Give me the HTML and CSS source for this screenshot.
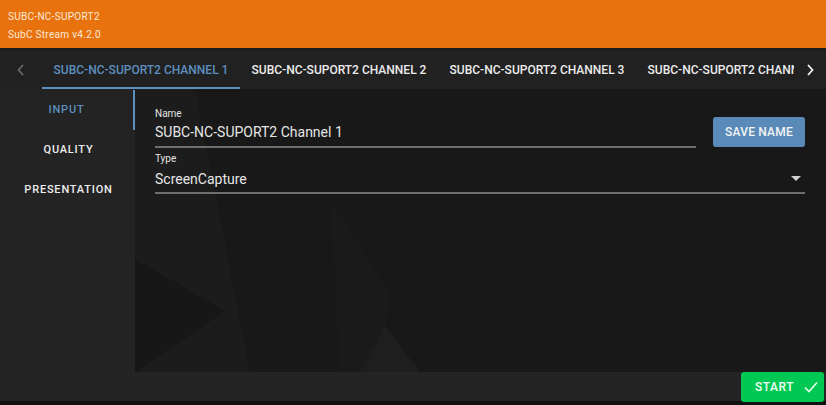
FILE: index.html
```html
<!DOCTYPE html>
<html lang="en">
<head>
  <meta charset="UTF-8">
  <meta name="viewport" content="width=device-width, initial-scale=1.0">
  <title>SubC Stream</title>
  <link rel="stylesheet" href="styles.css">
</head>
<body>
  <div class="header">
    <div>SUBC-NC-SUPORT2</div>
    <div>SubC Stream v4.2.0</div>
  </div>
  <div class="tabbar">
    <div class="chev chev-left">
      <svg width="10" height="12" viewBox="0 0 10 12"><path d="M7 1 L2.5 6 L7 11" fill="none" stroke="#6e6e6e" stroke-width="1.6"/></svg>
    </div>
    <div class="tabs">
      <div class="tab active">SUBC-NC-SUPORT2 CHANNEL 1</div>
      <div class="tab">SUBC-NC-SUPORT2 CHANNEL 2</div>
      <div class="tab">SUBC-NC-SUPORT2 CHANNEL 3</div>
      <div class="tab">SUBC-NC-SUPORT2 CHANNEL 4</div>
    </div>
    <div class="chev chev-right">
      <svg width="10" height="12" viewBox="0 0 10 12"><path d="M3 1 L7.5 6 L3 11" fill="none" stroke="#f2f2f2" stroke-width="1.8"/></svg>
    </div>
  </div>
  <div class="main">
    <div class="sidebar">
      <div class="side-item active">INPUT</div>
      <div class="side-item">QUALITY</div>
      <div class="side-item">PRESENTATION</div>
    </div>
    <div class="content">
      <!-- faint background artwork -->
      <svg class="backdrop" width="691" height="283" viewBox="0 0 691 283">
        <polygon points="0,0 60,0 115,283 0,283" fill="#1c1c1c"/>
        <polygon points="0,170 90,222 0,283" fill="#171717"/>
        <polygon points="195,110 255,205 245,283 205,283" fill="#1a1a1a"/>
        <polygon points="250,237 285,283 225,283" fill="#1e1e1e"/>
      </svg>
      <div class="row">
        <div class="field grow">
          <label>Name</label>
          <div class="value">SUBC-NC-SUPORT2 Channel 1</div>
        </div>
        <button class="btn-save">SAVE NAME</button>
      </div>
      <div class="field type-field">
        <label>Type</label>
        <div class="value select">
          <span>ScreenCapture</span>
          <svg width="10" height="5" viewBox="0 0 10 5"><polygon points="0,0 10,0 5,5" fill="#cfcfcf"/></svg>
        </div>
      </div>
    </div>
  </div>
  <div class="footer">
    <button class="btn-start">START
      <svg width="14" height="12" viewBox="0 0 14 12"><path d="M1 6.5 L5 10.5 L13 1.5" fill="none" stroke="#e9fbee" stroke-width="1.6"/></svg>
    </button>
  </div>
  <div class="bottom"></div>
</body>
</html>
```

FILE: styles.css
```css
body {
  margin: 0;
  width: 826px;
  height: 405px;
  overflow: hidden;
  background-color: #141414;
  font-family: Roboto, "Liberation Sans", sans-serif;
  color: #ececec;
}
.header {
  height: 50px;
  box-sizing: border-box;
  padding: 8px 8px 0;
  background-color: #e8730e;
  border-bottom: 2px solid #1b1b1b;
  font-size: 10px;
  line-height: 18px;
  color: #fbe9da;
  letter-spacing: 0.3px;
}
.tabbar {
  display: flex;
  height: 39px;
  background-color: #212121;
}
.chev {
  display: flex;
  align-items: center;
  justify-content: center;
  flex-shrink: 0;
}
.chev-left {
  width: 42px;
}
.chev-right {
  width: 32px;
}
.tabs {
  display: flex;
  flex: 1;
  overflow: hidden;
}
.tab {
  flex-shrink: 0;
  width: 198px;
  box-sizing: border-box;
  padding-top: 13px;
  text-align: center;
  font-size: 12px;
  font-weight: 500;
  white-space: nowrap;
  color: #ececec;
  border-bottom: 2px solid transparent;
}
.tab.active {
  color: #5d8fbf;
  border-bottom-color: #5d8fbf;
}
.main {
  display: flex;
  height: 283px;
}
.sidebar {
  width: 135px;
  flex-shrink: 0;
  padding-top: 1px;
  background-color: #232323;
}
.side-item {
  height: 40px;
  line-height: 40px;
  padding-left: 2px;
  text-align: center;
  font-size: 11px;
  font-weight: 500;
  letter-spacing: 0.8px;
  color: #ededed;
  box-sizing: border-box;
}
.side-item.active {
  color: #5d8fbf;
  border-right: 2px solid #5d8fbf;
  padding-left: 0;
}
.content {
  flex: 1;
  position: relative;
  background-color: #181818;
  padding: 19px 21px 0 20px;
  overflow: hidden;
}
.backdrop {
  position: absolute;
  top: 0;
  left: 0;
}
.row {
  position: relative;
  display: flex;
  align-items: flex-start;
  gap: 17px;
}
.field {
  position: relative;
}
.grow {
  flex: 1;
}
.field label {
  display: block;
  font-size: 10px;
  line-height: 12px;
  color: #e4e4e4;
}
.value {
  height: 26px;
  line-height: 24px;
  font-size: 14px;
  color: #e6e6e6;
  border-bottom: 2px solid #6f6f6f;
}
.type-field {
  margin-top: 5px;
}
.type-field .value {
  height: 27px;
  line-height: 28px;
}
.select {
  display: flex;
  align-items: center;
  justify-content: space-between;
  padding-right: 4px;
}
.btn-save {
  margin-top: 9px;
  width: 92px;
  height: 30px;
  border: none;
  border-radius: 3px;
  background-color: #5a8ab8;
  color: #f4f4f4;
  font-family: inherit;
  font-size: 12px;
  font-weight: 500;
  letter-spacing: 0.2px;
}
.footer {
  display: flex;
  justify-content: flex-end;
  height: 29px;
  padding-right: 2px;
  background-color: #242424;
}
.btn-start {
  display: flex;
  align-items: center;
  gap: 10px;
  width: 83px;
  height: 30px;
  padding: 0 0 0 14px;
  border: none;
  border-radius: 3px;
  background-color: #00c853;
  color: #f2fff6;
  font-family: inherit;
  font-size: 12px;
  font-weight: 500;
  letter-spacing: 0.5px;
}
.bottom {
  height: 4px;
  background-color: #111;
}
```
